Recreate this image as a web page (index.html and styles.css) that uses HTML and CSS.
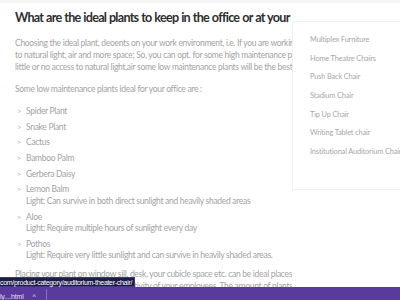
FILE: index.html
```html
<!DOCTYPE html>
<html lang="en">
<head>
    <meta charset="UTF-8">
    <title>Ideal office plants</title>
    <link rel="stylesheet" href="styles.css">
</head>
<body>
    <div class="topline"></div>
    <div class="page">
        <article class="post">
            <h2>What are the ideal plants to keep in the office or at your home</h2>
            <p class="intro">Choosing the ideal plant, deoents on your work environment, i.e. If you are working<br>to natural light, air and more space; So, you can opt. for some high maintenance plants<br>little or no access to natural light,air some low maintenance plants will be the best</p>
            <p class="lead">Some low maintenance plants ideal for your office are :</p>
            <ul class="plants">
                <li>Spider Plant</li>
                <li>Snake Plant</li>
                <li>Cactus</li>
                <li>Bamboo Palm</li>
                <li>Gerbera Daisy</li>
                <li>Lemon Balm<span class="light">Light: Can survive in both direct sunlight and heavily shaded areas</span></li>
                <li>Aloe<span class="light">Light: Require multiple hours of sunlight every day</span></li>
                <li>Pothos<span class="light">Light: Require very little sunlight and can survive in heavily shaded areas.</span></li>
            </ul>
            <p class="outro">Placing your plant on window sill, desk, your cubicle space etc. can be ideal places and it can enhance the ambience<br>of your work space and the productivity of your employees. The amount of plants you place depends</p>
        </article>
        <aside class="sidebar">
            <ul>
                <li>Multiplex Furniture</li>
                <li>Home Theatre Chairs</li>
                <li>Push Back Chair</li>
                <li>Stadium Chair</li>
                <li>Tip Up Chair</li>
                <li>Writing Tablet chair</li>
                <li>Institutional Auditorium Chair</li>
            </ul>
        </aside>
    </div>

    <div class="status-url">com/product-category/auditorium-theater-chair/</div>
    <div class="download-bar">
        <span class="file">ly....html</span>
        <span class="caret">^</span>
        <span class="divider"></span>
    </div>
</body>
</html>
```

FILE: styles.css
```css
* {
    margin: 0;
    padding: 0;
    box-sizing: border-box;
}

body {
    font-family: 'Lato', 'Open Sans', sans-serif;
    background: #fff;
    color: #a3a3a3;
    width: 400px;
    height: 300px;
    overflow: hidden;
    position: relative;
}

.topline {
    height: 3px;
    background: #f4f4f6;
}

.page {
    display: flex;
}

.post {
    width: 292px;
    padding-left: 15px;
    overflow: hidden;
    white-space: nowrap;
    flex-shrink: 0;
}

.post h2 {
    font-size: 12.6px;
    font-weight: 700;
    color: #2e2e2e;
    line-height: 18px;
    margin-top: 6px;
    margin-bottom: 10px;
    letter-spacing: -0.75px;
    word-spacing: 0.5px;
}

.intro,
.lead,
.outro {
    font-size: 8.5px;
    line-height: 12px;
    letter-spacing: -0.3px;
}

.intro {
    margin-bottom: 10px;
}

.lead {
    margin-bottom: 11px;
}

.plants {
    list-style: none;
    font-size: 8.5px;
    line-height: 11.5px;
    letter-spacing: -0.3px;
}

.plants li {
    position: relative;
    padding-left: 11px;
    margin-bottom: 4.2px;
}

.plants li::before {
    content: '>';
    position: absolute;
    left: 2px;
    top: 0;
    font-size: 7.5px;
    color: #b4b4b4;
}

.light {
    display: block;
}

.outro {
    margin-top: 6px;
}

.sidebar {
    flex: 1;
    margin-top: 18px;
    height: 169px;
    border: 1px solid #f1f1f1;
    border-right: none;
    background: #fff;
    padding: 13px 0 0 17px;
    white-space: nowrap;
    overflow: hidden;
}

.sidebar ul {
    list-style: none;
    font-size: 7.4px;
    line-height: 10px;
    letter-spacing: -0.15px;
    color: #a8a8a8;
}

.sidebar li {
    margin-bottom: 8.7px;
}

.status-url {
    position: absolute;
    left: 0;
    top: 277px;
    height: 10px;
    padding: 0 2px 0 0;
    background: #1d1b4a;
    color: #fff;
    font-family: 'Liberation Sans', sans-serif;
    font-size: 7px;
    letter-spacing: -0.3px;
    line-height: 9px;
    border: 1px solid #3c3a80;
    border-left: none;
}

.download-bar {
    position: absolute;
    left: 0;
    right: 0;
    bottom: 0;
    height: 13px;
    background: #5b3a9e;
    display: flex;
    align-items: center;
    color: #e6dff5;
    font-family: 'Liberation Sans', sans-serif;
    font-size: 7px;
}

.file {
    padding-top: 6px;
    letter-spacing: -0.2px;
}

.caret {
    margin-left: 9px;
    padding-top: 6px;
}

.divider {
    margin-left: 10px;
    width: 1px;
    align-self: stretch;
    margin-top: 2px;
    background: #8a6fc4;
}
```
